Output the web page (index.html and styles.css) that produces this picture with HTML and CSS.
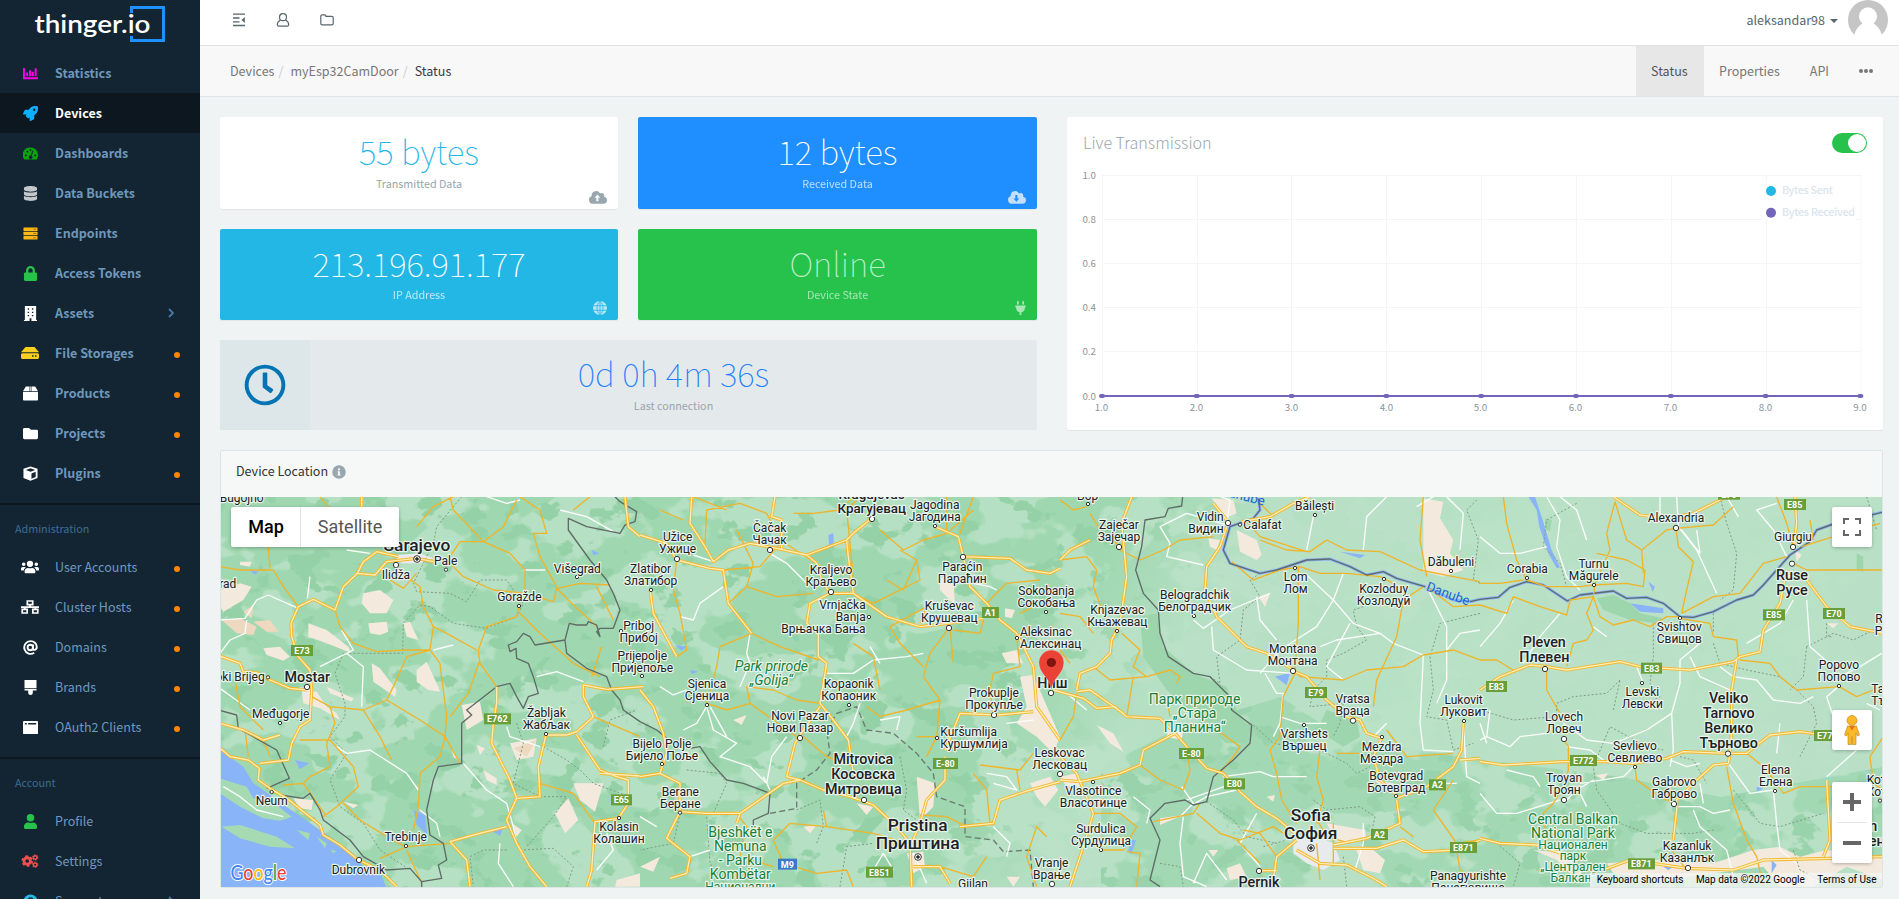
FILE: index.html
```html
<!DOCTYPE html>
<html lang="en">
<head>
<meta charset="utf-8">
<title>thinger.io - Device Status</title>
<link rel="stylesheet" href="styles.css">
</head>
<body>
<div class="app">
<aside class="sidebar">
  <div class="logo">
    <svg width="200" height="53" viewBox="0 0 200 53"><path d="M131.500 13V7.500H163.500V40.500H131.500V36" fill="none" stroke="#1f8ffb" stroke-width="3"/><text x="34.500" y="33" textLength="116" lengthAdjust="spacingAndGlyphs">thinger.io</text></svg>
  </div>
  <ul class="nav strong">
    <li><svg class="ico" viewBox="0 0 16 14" fill="#f0e"><path d="M0 1h2v10h14v2H0zM3.500 6h2v4h-2zM6.500 3.500h2V10h-2zM9.500 5h2v5h-2zM12.500 1.500h2V10h-2z"/></svg><span>Statistics</span></li>
    <li class="active"><svg class="ico" viewBox="0 0 512 512" fill="#0bb0ff"><path d="M505 19c-1-5-6-11-12-12C461 0 435 0 410 0 307 0 245 55 199 128H95c-16 0-35 12-43 26L2.500 253A28 28 0 0 0 0 264a24 24 0 0 0 24 24h104l-23 22c-11 12-13 33 0 46l51 51c11 11 32 13 46 0l22-23v104a24 24 0 0 0 24 24 28 28 0 0 0 11-2.500l99-49c14-8 26-27 26-43V313c73-46 128-109 128-211 0-25 0-51-7-83zM384 168a40 40 0 1 1 40-40 40 40 0 0 1-40 40z"/></svg><span>Devices</span></li>
    <li><svg class="ico" viewBox="0 0 16 13" fill="#0aa30a"><path fill-rule="evenodd" d="M8 0a8 8 0 0 1 8 8c0 1.800-.5 3.600-1.400 5H1.400A8 8 0 0 1 8 0zM2 8.500a1 1 0 1 0 2 0 1 1 0 0 0-2 0zM3.700 4.500a1 1 0 1 0 2 0 1 1 0 0 0-2 0zM7 2.700a1 1 0 1 0 2 0 1 1 0 0 0-2 0zM12 8.500a1 1 0 1 0 2 0 1 1 0 0 0-2 0zM9.800 3.600 8.400 8.500a2 2 0 1 0 1 .4l1.500-5z"/></svg><span>Dashboards</span></li>
    <li><svg class="ico" viewBox="0 0 448 512" fill="#c3c8cc"><path d="M448 73v46c0 40-100 73-224 73S0 159 0 119V73C0 33 100 0 224 0s224 33 224 73zM448 176v103c0 40-100 73-224 73S0 319 0 279V176c48 33 136 49 224 49s176-16 224-49zm0 160v103c0 40-100 73-224 73S0 479 0 439V336c48 33 136 49 224 49s176-16 224-49z"/></svg><span>Data Buckets</span></li>
    <li><svg class="ico" viewBox="0 0 16 14" fill="#fdb813"><rect x=".5" y=".5" width="15" height="3.800" rx=".6"/><rect x=".5" y="5.100" width="15" height="3.800" rx=".6"/><rect x=".5" y="9.700" width="15" height="3.800" rx=".6"/><path stroke="#a86b10" d="M11 2.400h3M11 7h3M11 11.600h3"/></svg><span>Endpoints</span></li>
    <li><svg class="ico" viewBox="0 0 448 512" fill="#27c24c"><path d="M400 224h-24v-72C376 68 308 0 224 0S72 68 72 152v72H48c-26 0-48 22-48 48v192c0 26 22 48 48 48h352c26 0 48-22 48-48V272c0-26-22-48-48-48zm-104 0H152v-72c0-40 32-72 72-72s72 32 72 72z"/></svg><span>Access Tokens</span></li>
    <li><svg class="ico" viewBox="0 0 14 16" fill="#fff"><path fill-rule="evenodd" d="M1 0h12v15h1v1H8v-3H6v3H0v-1h1zM4 2.500v1.500h1.500V2.500zM8.500 2.500v1.500H10V2.500zM4 6v1.500h1.500V6zM8.500 6v1.500H10V6zM4 9.500V11h1.500V9.500zM8.500 9.500V11H10V9.500z"/></svg><span>Assets</span><svg class="chev" viewBox="0 0 6 10"><path d="M1 1l4 4-4 4"/></svg></li>
    <li><svg class="ico wide" viewBox="0 0 18 12" fill="#f9cf1d"><path d="M4.500 0h9L18 5.300H0z"/><path fill-rule="evenodd" d="M1.500 6.200h15c.8 0 1.500.6 1.500 1.500V10.500c0 .8-.7 1.500-1.500 1.500h-15C.7 12 0 11.300 0 10.500V7.700c0-.9.700-1.500 1.500-1.500zM11 8.200v1.600h1.500V8.200zM14 8.200v1.600h1.500V8.200z"/></svg><span>File Storages</span><i class="dot"></i></li>
    <li><svg class="ico" viewBox="0 0 16 15" fill="#fff"><path d="M3 0h4v5H0zM9 0h4l3 5H9zM7.600 0h.8v5h-.8zM0 6h16v8a1 1 0 0 1-1 1H1a1 1 0 0 1-1-1z"/></svg><span>Products</span><i class="dot"></i></li>
    <li><svg class="ico" viewBox="0 0 512 512" fill="#fff"><path d="M464 128H272l-64-64H48C21 64 0 85 0 112v288c0 27 21 48 48 48h416c27 0 48-21 48-48V176c0-27-21-48-48-48z"/></svg><span>Projects</span><i class="dot"></i></li>
    <li><svg class="ico" viewBox="0 0 16 16" fill="#fff"><path fill-rule="evenodd" d="M8 .5 15.500 3v9.800L8 15.800.5 12.800V3zM8 2.500 3 4.200l5 2 5-2zM9 8v5.500l4.500-1.900V6.200z"/></svg><span>Plugins</span><i class="dot"></i></li>
  </ul>
  <h6>Administration</h6>
  <ul class="nav">
    <li><svg class="ico wide" viewBox="0 32 640 448" fill="#fff"><path d="M96 224a64 64 0 1 0 0-128 64 64 0 0 0 0 128zm448 0a64 64 0 1 0 0-128 64 64 0 0 0 0 128zm32 32h-64c-18 0-34 7-45 19 40 22 69 62 75 109h66c18 0 32-14 32-32v-32c0-35-29-64-64-64zm-256 0a112 112 0 1 0 0-224 112 112 0 0 0 0 224zm77 32h-8c-21 10-44 16-69 16s-48-6-69-16h-8c-63 0-115 52-115 115v29c0 26 22 48 48 48h288c26 0 48-22 48-48v-29c0-63-52-115-115-115zm-224-13c-11-12-27-19-45-19H64c-35 0-64 29-64 64v32c0 18 14 32 32 32h66c6-47 35-87 75-109z"/></svg><span>User Accounts</span><i class="dot"></i></li>
    <li><svg class="ico wide" viewBox="0 0 18 14" fill="none" stroke="#fff" stroke-width="1.700"><path d="M6.300 1h5.400v3.600H6.300zM1.200 9.400h5v3.600h-5zM11.800 9.400h5v3.600h-5zM9 5v2.200M0 7.200h18M3.700 7.200v2M14.300 7.200v2"/></svg><span>Cluster Hosts</span><i class="dot"></i></li>
    <li><svg class="ico" viewBox="0 0 16 16" fill="none" stroke="#fff" stroke-width="2"><circle cx="7.800" cy="8" r="2.900"/><path d="M10.900 4.800 10.400 9c-.2 2.300 4.300 2.200 4.300-1.500C14.700 3.800 11.700 1.200 8 1.200a6.800 6.800 0 1 0 4 12.400"/></svg><span>Domains</span><i class="dot"></i></li>
    <li><svg class="ico" viewBox="0 0 12 15" fill="#fff"><path d="M0 0h12v8H0zM0 8.700h12V10.500H8.300V13a2.300 2 0 0 1-4.600 0v-2.500H0z"/></svg><span>Brands</span><i class="dot"></i></li>
    <li><svg class="ico" viewBox="0 0 16 14" fill="#fff"><path fill-rule="evenodd" d="M1 0h14a1 1 0 0 1 1 1v12a1 1 0 0 1-1 1H1a1 1 0 0 1-1-1V1a1 1 0 0 1 1-1zM2 2.200v1.500h2V2.200zM5.500 2.200v1.500H14V2.200z"/></svg><span>OAuth2 Clients</span><i class="dot"></i></li>
  </ul>
  <h6>Account</h6>
  <ul class="nav">
    <li><svg class="ico" viewBox="0 0 448 512" fill="#27c24c"><path d="M224 256a128 128 0 1 0 0-256 128 128 0 0 0 0 256zm90 32h-17c-22 10-47 16-73 16s-51-6-73-16h-17C60 288 0 348 0 422v42c0 26 22 48 48 48h352c26 0 48-22 48-48v-42c0-74-60-134-134-134z"/></svg><span>Profile</span></li>
    <li><svg class="ico wide" viewBox="0 0 18 15" fill="none" stroke="#f05050"><circle cx="6" cy="7.500" r="3.500" stroke-width="3"/><circle cx="6" cy="7.500" r="5.300" stroke-width="1.800" stroke-dasharray="2.800 2.750"/><circle cx="14.500" cy="3.700" r="1.900" stroke-width="1.600"/><circle cx="14.500" cy="3.700" r="3" stroke-width="1" stroke-dasharray="1.600 1.540"/><circle cx="14.500" cy="11.500" r="1.900" stroke-width="1.600"/><circle cx="14.500" cy="11.500" r="3" stroke-width="1" stroke-dasharray="1.600 1.540"/></svg><span>Settings</span></li>
    <li><svg class="ico" viewBox="0 0 16 16"><circle cx="8" cy="8" r="7.500" fill="#23b7e5"/><path d="M5.800 6.200C6 3.500 10.300 3.600 10.200 6.200 10.100 7.800 8 7.800 8 9.500" fill="none" stroke="#132533" stroke-width="1.700"/></svg><span>Support</span><svg class="chev" viewBox="0 0 6 10"><path d="M1 1l4 4-4 4"/></svg></li>
  </ul>
</aside>
<main class="main">
  <header class="topbar">
    <svg class="tb" viewBox="0 0 14 14" stroke="#58666e" stroke-width="1.300"><path d="M1 1.200h12M1 5h6.500M1 8.800h6.500M1 12.500h12" fill="none"/><path d="M12.800 4v6L9.500 7z" fill="#58666e" stroke="none"/></svg>
    <svg class="tb" viewBox="0 0 14 14" fill="none" stroke="#58666e" stroke-width="1.200"><circle cx="7" cy="4.200" r="3.500"/><path d="M4.500 7.200C2.500 8 1.300 9.600 1.300 11.500c0 1 .6 1.700 1.500 1.700h8.400c.9 0 1.500-.7 1.500-1.700 0-1.900-1.200-3.500-3.200-4.300"/></svg>
    <svg class="tb" viewBox="0 0 14 14" fill="none" stroke="#58666e" stroke-width="1.200"><path d="M.8 3.200c0-.9.500-1.400 1.300-1.400h2.500c.8 0 1.300.5 1.300 1.600h5.900c.9 0 1.400.5 1.400 1.300v5.700c0 .9-.5 1.400-1.400 1.400H2.100c-.8 0-1.300-.5-1.300-1.400z"/></svg>
    <div class="user">aleksandar98<b class="caret"></b>
      <svg width="40" height="40" viewBox="0 0 40 40"><circle cx="20" cy="20" r="20" fill="#c5c5c5"/><circle cx="20" cy="16.300" r="9" fill="#fff"/><path d="M6 35c2-6 5-10 9-12h10c4 2 7 6 9 12v5H6z" fill="#fff"/></svg>
    </div>
  </header>
  <div class="subbar">
    <div class="crumbs"><span>Devices</span><em>/</em><span>myEsp32CamDoor</span><em>/</em><span class="cur">Status</span></div>
    <nav class="tabs"><a class="on">Status</a><a>Properties</a><a>API</a><a class="more"><i></i><i></i><i></i></a></nav>
  </div>
  <div class="content">
    <div class="row">
      <div class="stats">
        <div class="card plain"><strong>55 bytes</strong><span>Transmitted Data</span>
          <svg class="corner" width="18" height="13" viewBox="0 32 640 448"><path fill="#98a6ad" fill-rule="evenodd" d="M538 227c4-11 6-23 6-35a96 96 0 0 0-149-80A160 160 0 0 0 96 200 144 144 0 0 0 144 480h368a128 128 0 0 0 26-253zM300 150l100 115h-65v125h-75V265h-65z"/></svg></div>
        <div class="card blue"><strong>12 bytes</strong><span>Received Data</span>
          <svg class="corner" width="18" height="13" viewBox="0 32 640 448"><path fill="#c3deff" fill-rule="evenodd" d="M538 227c4-11 6-23 6-35a96 96 0 0 0-149-80A160 160 0 0 0 96 200 144 144 0 0 0 144 480h368a128 128 0 0 0 26-253zM300 410l100-115h-65V170h-75v125h-65z"/></svg></div>
        <div class="card cyan"><strong>213.196.91.177</strong><span>IP Address</span>
          <svg class="corner" width="14" height="14" viewBox="0 0 14 14"><circle cx="7" cy="7" r="7" fill="#b4e6f6"/><path d="M0 4.700h14M0 9.300h14M7 0v14M7 0C3 3.500 3 10.500 7 14M7 0c4 3.500 4 10.500 0 14" fill="none" stroke="#23b7e5" stroke-width=".8"/></svg></div>
        <div class="card green"><strong>Online</strong><span>Device State</span>
          <svg class="corner" width="11" height="14" viewBox="0 0 384 512"><path fill="#a9e7b7" d="M320 32a32 32 0 0 0-64 0v96h64zm48 128H16a16 16 0 0 0-16 16v32a16 16 0 0 0 16 16h16v32a160 160 0 0 0 128 157v99h64v-99a160 160 0 0 0 128-157v-32h16a16 16 0 0 0 16-16v-32a16 16 0 0 0-16-16zM128 32a32 32 0 0 0-64 0v96h64z"/></svg></div>
        <div class="last"><div class="clock"><svg width="42" height="42" viewBox="0 0 512 512"><path fill="#0574b5" d="M256 8a248 248 0 1 0 0 496 248 248 0 0 0 0-496zm0 448a200 200 0 1 1 0-400 200 200 0 0 1 0 400zm62-104-85-62c-3-2-5-6-5-10V116c0-7 5-12 12-12h32c7 0 12 5 12 12v142l67 48c5 4 6 12 2 17l-18 26c-4 5-12 7-17 3z"/></svg></div>
          <div class="lastbody"><strong>0d 0h 4m 36s</strong><span>Last connection</span></div></div>
      </div>
      <div class="chartcard">
        <div class="charthead"><h4>Live Transmission</h4><i class="switch"></i></div>
        <svg class="chart" width="786" height="250" viewBox="1082 167 786 250">
          <path class="grid" d="M1102 175.500H1861M1102 219.500H1861M1102 263.500H1861M1102 307.500H1861M1102 351.500H1861M1102.500 175V396M1197.500 175V396M1291.500 175V396M1386.500 175V396M1481.500 175V396M1576.500 175V396M1671.500 175V396M1766.500 175V396M1861 175V396"/>
          <rect x="1765" y="180" width="91" height="40" fill="#fff" opacity=".85"/>
          <circle cx="1771" cy="191" r="5" fill="#23b7e5"/><circle cx="1771" cy="212.700" r="5" fill="#7266ba"/>
          <g class="legend"><text x="1782" y="194" textLength="51">Bytes Sent</text><text x="1782" y="216" textLength="73">Bytes Received</text></g>
          <path d="M1102 396H1861" stroke="#7266ba" stroke-width="2"/>
          <path d="M1101 396H1862" stroke="#7266ba" stroke-width="4" stroke-dasharray="2 92.800" stroke-linecap="round"/>
          <g class="axis end"><text x="1096" y="179">1.0</text><text x="1096" y="223">0.8</text><text x="1096" y="267">0.6</text><text x="1096" y="311">0.4</text><text x="1096" y="355">0.2</text><text x="1096" y="400">0.0</text></g>
          <g class="axis mid"><text x="1101.500" y="411">1.0</text><text x="1196.500" y="411">2.0</text><text x="1291.500" y="411">3.0</text><text x="1386.500" y="411">4.0</text><text x="1480.500" y="411">5.0</text><text x="1575.500" y="411">6.0</text><text x="1670.500" y="411">7.0</text><text x="1765.500" y="411">8.0</text><text x="1860" y="411">9.0</text></g>
        </svg>
      </div>
    </div>
    <section class="panel">
      <div class="phead">Device Location <svg width="14" height="14" viewBox="0 0 512 512"><path fill="#98a6ad" fill-rule="evenodd" d="M256 8a248 248 0 1 0 0 496 248 248 0 0 0 0-496zm0 110a42 42 0 1 1 0 84 42 42 0 0 1 0-84zm56 254c0 7-5 12-12 12h-88c-7 0-12-5-12-12v-24c0-7 5-12 12-12h12v-64h-12c-7 0-12-5-12-12v-24c0-7 5-12 12-12h64c7 0 12 5 12 12v100h12c7 0 12 5 12 12z"/></svg></div>
      <div class="mapbox">
<svg class="map" width="1661" height="390" viewBox="0 0 1661 390">
<defs>
<filter id="dark" color-interpolation-filters="sRGB" x="0" y="0" width="100%" height="100%"><feTurbulence type="fractalNoise" baseFrequency=".012 .016" numOctaves="4" seed="8"/><feColorMatrix values="0 0 0 0 .62  0 0 0 0 .845  0 0 0 0 .69  26 0 0 0 -11.700"/></filter>
<filter id="deep" color-interpolation-filters="sRGB" x="0" y="0" width="100%" height="100%"><feTurbulence type="fractalNoise" baseFrequency=".03 .04" numOctaves="4" seed="21"/><feColorMatrix values="0 0 0 0 .58  0 0 0 0 .82  0 0 0 0 .65  20 0 0 0 -12.200"/></filter>
<linearGradient id="fade" x1="0" x2="1" y1="0" y2=".14"><stop offset="0" stop-color="#fff"/><stop offset=".54" stop-color="#fff"/><stop offset=".62" stop-color="#222"/><stop offset="1" stop-color="#111"/></linearGradient>
<mask id="west"><rect width="1661" height="390" fill="url(#fade)"/><path d="M880 270 960 230 1060 200 1120 240 1240 260 1400 280 1500 300 1661 270V390H880z" fill="#ddd"/></mask>
<g id="majA"><path d="M425 20V60M-10 495 60 520 70 545 110 548 150 570 210 595 260 600M535 200 470 185 430 215 412 250 370 290 345 360 280 328 235 350 213 400 215 440 235 500 270 540 275 600 270 690 240 710 215 760 205 810 120 820M0 700 70 720 130 750 180 735M-10 765 30 800 85 810 118 835 115 870 150 895 200 925 300 1005 310 1035 360 1065 415 1110 480 1140 530 1190M412 250 465 255 500 215 590 205 640 215M830 590V640L820 700 815 760 870 870 890 925 960 920 955 830 978 735 1040 735 1070 725 1120 680 1090 620 1090 585 1160 598 1270 590M1070 735 1140 840 1190 860 1225 870V940L1195 985 1125 995 1115 1140 1100 1190M1140 850 1260 858M890 925 860 990 890 1060 930 1130 980 1190M690 1055 760 1035 860 1010M690 1055 740 1110 750 1190M1215 20 1225 110 1260 140"/></g>
<g id="majB"><path d="M155 20 150 100 195 170 220 215 265 180 330 160 410 175 500 195 620 150 640 130 695 85M500 195 530 220 545 270 570 310 640 310 740 380 840 410 925 400 1030 385M0 135 80 160 110 210 210 235 250 240 265 340 335 430M405 20 395 80 425 90V180M620 150 625 200 640 310M570 310 510 340 500 400 535 430V500L560 520 540 640 580 690 625 750 640 850M540 650 490 720 465 760 440 860 480 870 550 900 630 920 700 945 770 1010 810 1060 815 1190M480 870 430 880 300 970 200 970 120 965 80 1045 150 1100 140 1150 90 1165M0 600 40 650 70 730 80 790 60 850 0 860M60 850 120 880V965M885 110 955 140 970 200 990 290 1040 340 1080 390 1130 430 1180 530 1190 650 1260 750M970 200 1110 205 1160 240 1230 250 1260 235M1180 665 1070 675 960 670 940 720 915 780M860 930 915 870V800M860 930 840 1000 815 1060M820 1130 900 1130 930 1180M30 300 40 370 110 500M960 1010 1060 1000 1080 930 1170 900 1260 875M300 970 290 1000"/></g>
<g id="majC"><path d="M-20 600 70 625 110 655 165 650 200 680 300 685 345 730 380 770 440 835 490 850 540 905 590 950 650 985 710 1035M50 605 90 600 190 670M50 600 60 550 110 530 150 490 155 450 180 400 200 260 185 100 215 20M0 210 30 180 90 150M690 540 740 560 800 630 860 680 900 690 920 730 965 745 940 800 960 870 1010 915M500 110 480 170 440 230 435 300 470 380 560 470 620 490 700 540M460 40 500 90M545 95 630 80 700 40 750 20M1010 930 1020 1000 920 1045 820 1065M1010 925 1100 890 1180 830 1205 780 1210 700M1200 810 1260 805M820 1075 950 1075 1030 1050 1090 1085 1200 1080 1260 1050M640 1170 650 1100 710 1050M710 1080 780 1120 860 1125 940 1165 980 1190M345 730 250 780 240 825 180 850 60 875 0 870M0 800 50 850 100 970 70 1070 30 1190M597 1142H650"/></g>
<g id="majD"><path d="M0 815 70 825 250 815 380 815 460 820 560 805 610 785 740 790 800 790 870 735 960 725 1060 740M0 600 60 560 150 525 200 530 260 540 420 515 480 530 630 540 760 515 780 500 840 485 850 420 900 340 920 240M770 510 755 600V720L750 790 745 820 700 825 640 880 590 930V960L580 1050M940 180 950 100 945 20M965 250 1040 350 1110 410 1210 430M400 20 480 75 560 85 640 70 740 20M0 1045 60 1060 170 1065 300 1110M370 1140 450 1110 620 1135 760 1140 850 1110 1050 1105 1210 1100M1040 870 1050 1050 1030 1100"/></g>
</defs>
<rect width="1661" height="390" fill="#bbe2c8"/>
<g mask="url(#west)"><rect width="1661" height="390" fill="#b6e0c3"/><rect width="1661" height="390" filter="url(#dark)"/><rect width="1661" height="390" filter="url(#deep)"/></g>
<g class="land" transform="translate(-1 -7) scale(.33333)">
 <path class="sea" d="M0 780 70 830 100 880 130 900 170 930 300 1020 400 1090 430 1130 480 1145 500 1195H0z"/>
 <path class="isle" d="M0 865 80 890 100 925 150 930 215 980 180 992 130 985 60 950 0 910zM5 1010 60 1005 170 1040 225 1075 150 1070 60 1045zM230 1020 270 1030 265 1050zM290 1040 320 1060 315 1075zM330 1078 350 1084 340 1090z"/>
 <path class="lake" d="M580 960 615 975 622 1035 590 1005zM225 810 268 820 240 838zM85 238 115 245 105 254zM1115 180 1138 190 1120 196zM820 1025 850 1010 840 1038z"/>
 <path class="sand" d="M0 300 60 280 95 290 70 330 10 365 0 350zM430 310 480 300 520 330 500 370 450 370 425 340zM445 400 500 395 505 425 480 435 450 430zM550 400 570 395 595 450 560 440zM265 400 320 420 385 470 395 490 320 460 265 440zM130 475 180 470 210 500 190 512 140 495zM590 540 620 515 655 590 660 605 625 600 590 575zM455 520 480 535 530 600 525 620 460 575zM245 600 290 605 320 650 350 670 360 690 300 655 250 640zM320 590 400 625 395 635 330 610zM725 645 780 635 790 690 740 720zM870 760 950 745 940 800 890 810zM1060 880 1150 880 1125 965 1080 930zM1005 970 1045 925 1075 990 1035 1030zM220 925 280 930 275 960 240 955zM370 935 415 945 400 955zM695 775 720 815 700 800zM790 840 830 865 830 885 800 870zM770 765 795 775 780 795zM1190 1170 1260 1150V1190H1185zM60 215 95 215 90 230 60 225zM875 1000 905 1020 890 1040z"/>
 <path class="tan" d="M5 390 60 385 110 410 100 435 50 430zM100 395 150 390 175 425 140 425zM70 365 100 345 95 385zM880 775 950 750 920 800z"/>
 <path class="city" d="M520 195 600 190 640 205 600 220 545 220zM240 590 275 600 255 620z"/>
</g>
<g class="land" transform="translate(419 -7) scale(.33333)">
 <path class="sand" d="M900 260 940 270 945 345 900 300zM1095 355 1125 360 1115 385 1095 380zM1140 560 1180 555 1260 740 1240 790 1190 740 1130 700 1160 650zM830 860 885 880 880 950 840 990zM1085 490 1130 480 1150 520 1100 520zM1170 880 1230 860 1255 900 1215 950 1190 920zM280 690 320 675 305 705zM650 940 700 950 680 975zM800 1090 850 1085 855 1130 820 1150zM490 1010 530 1005 510 1030zM1100 1160 1140 1160 1120 1190zM0 1130 60 1100 40 1145z"/>
 <path class="lake" d="M565 135 580 130 582 170 568 175zM105 465 140 470 125 482zM150 540 175 545 155 552z"/>
</g>
<g class="land" transform="translate(839 -7) scale(.33333)">
 <path class="wood" d="M240 380 290 370 310 470 400 550 500 590 530 660 570 710 560 760 500 760 430 700 320 600 250 500zM800 660 890 690 900 740 850 770 770 720z"/>
 <path class="sand" d="M455 25 520 30 530 70 495 85zM530 120 590 150 605 195 590 210 540 185zM1090 25 1150 35 1140 85 1180 150 1170 190 1210 240 1150 260 1090 245zM110 705 160 730 190 785 150 760zM445 145 480 150 470 180 450 170zM595 320 630 312 615 350zM325 715 370 720 365 750 320 740zM620 920 645 915 640 935zM800 1000 915 1020 920 1050 830 1055zM885 1070 940 1080 975 1110 960 1150 910 1140zM300 985 370 975 300 1005zM0 860 50 850 60 890 20 890zM445 1080 475 1080 460 1100zM500 1135 540 1120 560 1160 510 1170zM940 870 1000 880 990 910z"/>
 <path class="city" d="M700 1050 760 1035 820 1060 840 1110 790 1140 740 1120 700 1090z"/>
 <path class="lake" d="M645 560 690 548 680 585zM840 185 915 195 900 205zM210 1050 228 1050 215 1092 205 1085z"/>
</g>
<g class="land" transform="translate(1259 -7) scale(.33333)">
 <path class="sand" d="M820 1080 900 1070 960 1100 1040 1080 1210 1100V1170L1100 1130 1000 1190H900L850 1130 700 1150 560 1170 400 1150 380 1120 530 1110 700 1120zM160 1080 260 1090 310 1140 290 1170 230 1110zM1040 400 1075 400 1060 415zM345 855 385 850 370 870zM945 180 965 195 950 215z"/>
 <path class="lake" d="M145 20 165 20 188 90 215 180 240 232 230 235 205 190 178 110 170 60zM505 275 525 290 518 305zM875 1110 890 1125 875 1150zM550 1130 580 1130 565 1140zM450 340 480 365 550 370 550 355zM830 890 850 895 830 905z"/>
 <path class="wood" d="M350 325 400 315 450 340 480 370 550 385 530 400 450 390 370 360zM195 85 215 90 210 125 195 115zM1130 190 1150 200 1150 245 1130 240z"/>
</g>
<g class="river" transform="translate(839 -7) scale(.33333)"><path d="M595 25 600 60 580 85 510 110 490 180 510 220 600 250 650 240 740 210 810 207 870 230 920 255 970 245 1010 265 1095 290 1180 330 1230 335 1260 328 1315 322 1350 292 1400 275 1450 285 1522 333 1560 315 1660 303 1700 325 1760 322 1810 340 1860 380 1900 382 1960 365 2030 330 2080 315 2110 285 2150 240 2190 195 2250 155 2270 120 2320 102 2470 66"/></g>

<g transform="translate(-1 -7) scale(.33333)">
 <path class="dash" d="M725 20 650 110 640 160 610 220 580 280 590 305 690 310 740 335 780 270 860 270 880 300 910 340 890 380 800 415 700 400 630 350 600 345 550 400 548 490 370 490 345 550 375 640V680L330 740 380 790 330 870 360 950 430 1000 480 1080 570 1140M970 770 1040 810 1080 840 1120 880 1230 920M890 700 910 760 880 880 960 920M860 1080 790 1080 750 1100 760 1190M900 1080 1000 1075 1060 1130 1040 1190M1150 770 1170 690 1250 660M960 920 1040 920 1000 980 920 1070"/>
 <path class="white" d="M0 390 75 385 110 330 145 315 235 355M270 260 262 325M380 180 450 190M380 490 430 530 425 650M350 770 380 790 450 780 560 850 595 900M730 820 800 900 860 940 880 1010 890 1060 910 1100M640 480 700 465M860 710 870 740 960 770M950 560 1010 545 1090 575M0 595 90 660M10 890 60 920 110 960 190 980M600 960 650 1000 660 1040M365 420 400 480 300 530M1020 60 1100 80 1180 125M0 490 30 450 75 430 80 390M910 240 975 240M1130 1140 1180 1080 1160 1030M840 1060 835 1120 880 1190M800 20 860 40 900 30"/>
 <path class="minor" d="M0 230 60 240 160 240 190 290 235 350M145 170 150 235M590 110 640 50 700 20M340 70 300 20M640 215 690 200 720 155 790 155 850 110 890 30M690 220 730 260 820 300 915 310V240L870 190 790 155 700 60 690 20M915 310 1000 335 1010 295 1080 280 1170 285M1010 295 1060 345 1110 390 1130 410M900 340 890 380 800 410 775 480 780 520 830 590M900 370 960 430 1060 520 1140 560M345 360 360 410 400 460 470 485 560 480 630 480 640 410 610 350 600 290 520 230M640 410 680 430 770 480M630 480 560 500 520 590 500 630 430 660 330 650 275 620M430 660 480 740 515 810M500 630 600 690 675 740M630 480 660 520 670 600 680 680 675 740 660 800 600 850 595 950 580 1020M675 740 720 820M780 510 745 610 690 680M330 650 345 700 320 760 330 830 270 860 250 880 190 885M240 750 330 750 400 830 415 890 350 950 310 980M480 1105 560 1070 690 1060M370 940 420 990 500 1040 555 1070M960 880 1060 910 1125 1000M940 130 960 200 1010 290M75 720 85 800M560 1080 605 1180M1130 290 1180 390M1145 470 1115 560M1120 680 1190 710 1260 740M940 130 980 130 960 60 900 20M510 270 550 295 590 250M45 570 60 650 130 720M130 750 150 800M250 880 320 980M1060 60 1110 20"/>
 <path class="border" d="M-5 660 50 675 55 715 170 780 208 865 140 895M180 915 250 925 270 910 300 960 310 990 390 1050 430 1100 500 1140 570 1135 605 1175 665 1165 655 1125 680 1110 670 1060 630 1035 620 960 640 870 655 830 725 820V700L755 675 740 660 830 590 870 580 890 620 910 655 925 620 955 610 940 560 925 520 890 505 888 475 870 485 865 465 890 455 910 430 930 440 945 465 1035 450 1048 400 1070 405 1100 405 1105 395 1130 405 1140 440 1130 425 1140 415 1180 415 1200 360 1180 310 1160 270 1110 210 1045 120V85L1100 110 1200 130 1215 105 1245 95 1250 65 1200 35 1185 20M1035 450 1040 490 1100 535 1160 560 1175 600 1200 630 1210 660 1260 695 1310 720 1340 745 1410 775 1440 770 1470 815 1520 870 1570 880 1650 910 1645 970 1600 990V1010M605 1175V1195"/>
 <use href="#majA" class="mo"/><use href="#majA" class="mi"/>
</g>
<g transform="translate(419 -7) scale(.33333)">
 <path class="ddash" d="M390 970 470 955V880L530 840 570 790 560 720 590 670 650 650 680 720 760 730 830 790 880 850 890 920 975 950V1040L1060 1050 1090 1085 1170 1080 1180 1190"/>
 <path class="dash" d="M140 840 240 850 260 880 220 970M120 970 100 1060 0 1080M780 800 800 900 790 960 830 990M470 960 540 930 550 1010 530 1060M600 1190 620 1070 700 1060M200 980 210 1120 260 1190"/>
 <path class="white" d="M120 380 160 390 180 340 250 290M160 195 220 215M390 190 440 220 500 280M330 430 320 490 330 520 300 590M60 590 100 615 140 600M200 650 170 700 130 720M200 650 220 720 290 760 240 800 330 830 380 880 395 800 440 740M210 650 260 740M560 550 640 550 700 510 800 500 850 490M690 470 720 520M660 640 640 700 620 740M720 690 780 680 770 720M1100 700 1180 690M1060 880 1130 900 1100 860 1040 850M1060 1010 1110 1060 1100 1100M820 1090 860 1180M700 1140 730 1090 760 1140M150 1100 210 1080M0 980 50 1010M1000 280 1050 290 1070 300M370 860 390 900"/>
 <path class="minor" d="M195 160 200 60 300 40 380 70 410 130M250 240 360 230 420 160M460 70 520 70 600 60 640 20M265 340 320 290 410 320 520 310M320 290 340 220 290 120M110 210 100 300 120 370 140 480 110 500M335 430 420 470 535 510M335 430 240 470 230 530 200 640 260 660 330 640 320 590 400 600 470 630 540 640M330 640 400 690 470 740M490 740 560 800 640 830M720 120 790 180 850 150 920 130 1000 60M780 180 830 210 790 300 740 270M640 310 700 340 840 270 830 210M640 260 620 60 660 20M930 410 870 490 850 560 900 630 890 740 860 800M930 410 940 520M840 400 860 350 750 410 780 460 850 530M1030 390 1020 430 940 420M1130 440 1140 530 1060 550 1050 600 1060 670M680 650 720 680 800 660 900 630M1040 340 1100 280 1200 270M1140 370 1200 340 1260 350M890 740 830 740M840 975 920 980 980 1010M1000 850 1040 900 1050 1000M1130 840 1140 900M1020 825 1140 840 1180 790M400 1050 450 1000 560 1010M400 1050 430 1120 530 1150 620 1140 640 1190M560 1010 700 1030 800 1060M560 1010 550 960M900 1130 1000 1160 1040 1100M640 460 700 500 720 600M160 20 260 60M920 20V130M1000 20 960 130M1190 1190 1160 1100 1190 1010 1220 1040M290 970 320 1010 300 1100 400 1130M420 150 560 240M60 60 130 90"/>
 <use href="#majB" class="mo"/><use href="#majB" class="mi"/>
</g>
<g transform="translate(839 -7) scale(.33333)">
 <path class="dash" d="M600 250 570 270 600 320 550 360 540 450 470 500 480 580 450 560M910 350 880 360 890 410 920 450 850 490 800 510 800 560 760 600 750 650 850 640M580 705 640 760 780 780 860 820 890 850 930 830M1250 30 1220 60 1255 150 1240 270 1260 280M1260 370 1140 400 1110 500 1120 600 1100 680 1160 690 1180 780 1240 760M440 935 520 990 560 1040 650 1060M760 930 800 960 900 950 945 980 930 1050M300 1120 360 1130 370 1190M610 1070 680 1050M850 1100 860 1190M850 640 840 700 820 740"/>
 <path class="white" d="M500 110 510 30 480 20M500 105 380 70 300 110 330 160 320 200 430 225M740 180 760 80M910 180 920 80 980 20M850 250 820 330 880 400 960 430 1000 460 1090 495 1080 700 1090 780 1180 785M740 255 820 330 770 410 660 480 600 550M590 320 600 390 650 450M455 410 460 480 560 540 700 550M615 550 650 610 670 610 660 700 640 740M660 680 720 700 800 700M400 390 430 415 510 360 630 310M780 470 830 450 960 430M1100 290 1160 410 1160 570 1130 640M1160 480 1200 430 1260 420M1210 700 1220 860 1260 880M1070 50 1120 20M490 860 600 845 640 860 740 860M590 970 540 1060 600 1130 560 1080M370 980 360 1060 370 1160 440 1190M220 920 270 960 260 1000M365 890 400 940 360 980M530 900 440 920 405 940M885 1140 910 1060 910 1000M870 400 800 530 850 570M980 700 940 740M20 610 80 660M500 1170 440 1090 400 1180M520 880 380 930M1120 880 1190 880M1160 20 1210 70 1200 180"/>
 <path class="minor" d="M0 30 40 60 80 50M90 70 120 120 180 170M0 210 80 200 110 240 100 290 130 370M180 180 240 210 310 180 360 150 460 140M0 370 60 380 100 430M185 430 240 480 220 530 260 560 330 540 360 560 350 580M100 530 150 570 260 560M200 680 220 560M0 480 30 520M50 610 40 680 0 750M240 825 300 870 370 900 390 840 380 780M470 720 540 770 520 800 480 850M330 680 320 620M600 150 680 180 750 185 800 150 860 180 960 185 1080 240 1180 260 1260 275M1100 260 1080 150 1090 20M515 215 580 270 660 240 720 230 780 250 860 250 960 260 1000 280M715 230 715 400 705 540 720 560 850 570 920 540 1030 530 1090 495 1180 480 1260 510M1090 290 1030 330 1010 440 950 570 940 650M1100 290 1180 350 1260 345M705 550 670 620 660 740 630 780 650 850 665 930 710 1000M780 780 770 860 790 930 770 1000M830 790 900 790M720 0 740 30M560 95 600 140 740 185M640 80 600 40M410 970 480 1030 540 1050 640 1010 700 1050M280 995 400 970 420 940M650 1100 600 1030 550 1020M530 1050 600 1120M1180 870 1120 960 1190 1060 1260 1050M100 970 180 970 230 1010 190 1080 130 1080M200 1085 240 1090 230 1190M980 720 1040 800 1180 790M1020 1010 1060 1040M1190 1080 1200 1140 1260 1170M870 1060 800 1040 760 970M820 1000 820 1130M770 1060 780 1170"/>
 <path class="border" d="M368 20 365 48 325 55 315 80 255 90 245 170 227 240 250 310 295 360 300 430 325 500 400 550 450 560 510 620 515 660 575 705 570 760 520 810 460 860 440 935 400 945 375 930 315 940 270 985 300 1050 285 1110 270 1170 300 1190M595 25 600 60 580 85 510 110 490 180 510 220 600 250 650 240 740 210 810 207 870 230 920 255 970 245 1010 265 1095 290M1230 335 1260 328 1315 322 1350 292 1400 275 1450 285 1522 333 1560 315 1660 303 1700 325 1760 322 1810 340 1860 380 1900 382 1960 365 2030 330 2080 315 2110 285 2150 240 2190 195 2250 155 2270 120 2320 102 2470 66"/>
 <use href="#majC" class="mo"/><use href="#majC" class="mi"/>
</g>
<g transform="translate(1259 -7) scale(.33333)">
 <path class="dash" d="M290 40 200 90 190 170 240 220 260 290M720 20 740 100 770 190 760 300 720 330M520 400 520 500 510 580 540 620 500 640M700 460 720 520 800 540 900 560 950 600 1000 650 1010 700 960 800M980 470 1060 430 1120 450 1180 420M980 470 970 560 930 600M420 570 380 610 280 620 230 640 230 680 100 690 0 660M400 660 420 570M550 780 500 770 390 710 340 830 350 900 420 1000 500 1030 640 1030 700 1020M600 800 640 810 680 880M760 900 840 1000 900 1010 1030 970M50 1060 120 1120 100 1190M1160 20 1190 120M1040 400 1040 440 1060 440M700 370 700 430M400 1010 330 1060M940 1080 960 1140 1040 1180"/>
 <path class="white" d="M200 20 240 90 230 170 260 260 300 300M0 140 60 190 120 190 200 170M240 20 290 60 320 150M540 20V90M590 20 595 110M595 110 650 180 710 310M605 120 660 190 650 120M740 20 775 80M890 40 830 60 880 120 920 200M240 370 180 440 130 520M470 530 490 580M660 460 600 510 600 580 575 670 500 720 400 760 320 750 250 700M575 670 580 780 570 830M630 500 660 560 750 600M720 530 760 560 830 570 880 630 960 640 1000 620M980 330 990 470 1060 530M1205 490 1140 530 1080 560M1075 590 1040 620 1060 680M30 660 20 740 0 750M20 740 90 770 120 740 200 730M260 770 330 780 370 810M340 870 290 900 260 930M300 880 430 860 460 830M0 910 50 970 110 970 240 930M80 840 160 860 180 890M660 820 620 830 570 810M590 950 660 950 700 970 750 960M660 880 670 940M745 820 810 910 880 900 890 1000 900 1080 950 1120M1040 860 1130 780M640 960 660 1010 740 1080 760 1160M900 700 890 790M1160 640 1200 660M0 700 20 760M340 410 380 440M100 330 60 400 0 470M800 460 900 400 940 330M290 890 320 950"/>
 <path class="minor" d="M70 20 80 100 110 210 140 270 200 290 300 290 340 285 440 280 490 290 495 240 440 210 350 190M405 35 380 130 390 180 345 280M405 35 440 150 485 180 490 250M485 180 560 120 588 115M588 115 595 170 640 215 620 300 605 370M588 115 700 105 760 50M605 370 700 320 780 310 850 220 920 200M0 280 60 280 130 270M0 345 80 370 100 320 180 350 260 375 270 330 340 320 345 280M340 320 360 380 400 405 460 390 510 410 560 380 600 380M340 320 320 370 340 420 320 450 280 460 260 530M0 510 50 510 100 540M200 540 200 600 240 670M252 750 265 770 265 840 250 890 220 940 190 970 200 1050M465 830 470 870 540 920 580 940M600 385 690 400 700 440 770 450 775 500M740 830 760 940 800 1050 830 1100 850 1190M800 790 850 830 890 880 910 910 960 890 1060 890M890 20 920 100 940 170M965 170 1060 140 1200 100M930 215 980 240 1100 240 1205 240M780 510 870 520 900 560 950 600 1077 590 1130 620 1180 600M1210 740 1170 800 1180 880 1210 900M380 1140 300 1140 240 1170M620 1140 560 1060M1000 150 990 90"/>
 <use href="#majD" class="mo"/><use href="#majD" class="mi"/>
</g>

<g class="lab" transform="translate(-1 -7) scale(.33333)">
 <g class="pt"><circle cx="528" cy="225" r="8"/><circle cx="678" cy="239" r="5"/><circle cx="1071" cy="261" r="5"/><circle cx="897" cy="348" r="5"/><circle cx="261" cy="591" r="8"/><circle cx="144" cy="562" r="5"/><circle cx="180" cy="699" r="5"/><circle cx="978" cy="732" r="5"/><circle cx="155" cy="906" r="5"/><circle cx="558" cy="1068" r="5"/><circle cx="417" cy="1110" r="8"/><circle cx="1197" cy="984" r="5"/><circle cx="1203" cy="423" r="5"/><circle cx="1266" cy="558" r="5"/><circle cx="1326" cy="822" r="5"/><circle cx="1293" cy="300" r="5"/><circle cx="591" cy="207" r="10"/><circle class="k" cx="591" cy="207" r="4"/></g>
 <text x="65" y="37">Bugojno</text><text class="c" x="591" y="184">Sarajevo</text><text x="677" y="226">Pale</text><text x="528" y="268">Ilidža</text><text class="e" x="49" y="295">rad</text><text x="1072" y="248">Višegrad</text><text x="898" y="334">Goražde</text><text class="b" x="262" y="576">Mostar</text><text class="e" x="134" y="574">Široki Brijeg</text><text x="182" y="685">Međugorje</text>
 <text x="979" y="682">Žabljak<tspan x="979" dy="36">Жабљак</tspan></text><text x="155" y="945">Neum</text><text x="557" y="1054">Trebinje</text><text x="415" y="1152">Dubrovnik</text>
 <text x="1197" y="1024">Kolasin<tspan x="1197" dy="36">Колашин</tspan></text><text x="1256" y="419">Priboj<tspan x="1256" dy="36">Прибој</tspan></text><text x="1267" y="509">Prijepolje<tspan x="1267" dy="36">Пријепоље</tspan></text><text x="1326" y="773">Bijelo Polje<tspan x="1326" dy="36">Бијело Поље</tspan></text><text x="1292" y="250">Zlatibor<tspan x="1292" dy="36">Златибор</tspan></text>
 <g class="sh"><rect x="213" y="465" width="66" height="33"/><text x="246" y="491">E73</text><rect x="792" y="670" width="81" height="33"/><text x="832" y="697">E762</text><rect x="1173" y="913" width="63" height="33"/><text x="1204" y="940">E65</text></g>
</g>
<g class="lab" transform="translate(419 -7) scale(.33333)">
 <g class="pt"><circle cx="111" cy="207" r="8"/><circle cx="390" cy="180" r="8"/><circle cx="696" cy="87" r="8"/><circle cx="885" cy="108" r="5"/><circle cx="969" cy="201" r="8"/><circle cx="573" cy="306" r="8"/><circle cx="687" cy="381" r="5"/><circle cx="927" cy="414" r="8"/><circle cx="1218" cy="366" r="5"/><circle cx="1131" cy="444" r="5"/><circle cx="201" cy="645" r="5"/><circle cx="627" cy="645" r="5"/><circle cx="480" cy="744" r="8"/><circle cx="1062" cy="675" r="8"/><circle cx="891" cy="744" r="5"/><circle cx="672" cy="930" r="8"/><circle cx="120" cy="968" r="5"/><circle cx="1233" cy="609" r="8"/><circle cx="1260" cy="852" r="8"/><circle cx="1236" cy="1182" r="8"/><circle cx="834" cy="1101" r="10"/><circle class="k" cx="834" cy="1101" r="4"/></g>
 <text x="113" y="154">Užice<tspan x="113" dy="36">Ужице</tspan></text><text x="389" y="127">Čačak<tspan x="389" dy="36">Чачак</tspan></text><text class="b s" x="695" y="28">Kragujevac<tspan x="695" dy="40">Крагујевац</tspan></text><text x="884" y="58">Jagodina<tspan x="884" dy="36">Јагодина</tspan></text><text x="967" y="244">Paraćin<tspan x="967" dy="36">Параћин</tspan></text><text x="573" y="253">Kraljevo<tspan x="573" dy="36">Краљево</tspan></text><text class="e" x="677" y="358">Vrnjačka<tspan x="677" dy="36">Banja</tspan><tspan x="677" dy="36">Врњачка Бања</tspan></text><text x="928" y="361">Kruševac<tspan x="928" dy="36">Крушевац</tspan></text><text x="1219" y="316">Sokobanja<tspan x="1219" dy="36">Сокобања</tspan></text><text class="st" x="1140" y="439">Aleksinac<tspan x="1140" dy="36">Алексинац</tspan></text><text x="201" y="595">Sjenica<tspan x="201" dy="36">Сјеница</tspan></text><text x="626" y="595">Kopaonik<tspan x="626" dy="36">Копаоник</tspan></text><text x="480" y="691">Novi Pazar<tspan x="480" dy="36">Нови Пазар</tspan></text><text x="1062" y="622">Prokuplje<tspan x="1062" dy="36">Прокупље</tspan></text><text class="st" x="901" y="739">Kuršumlija<tspan x="901" dy="36">Куршумлија</tspan></text><text x="1259" y="800">Leskovac<tspan x="1259" dy="36">Лесковац</tspan></text><text x="121" y="919">Berane<tspan x="121" dy="36">Беране</tspan></text><text x="999" y="1193">Gjilan</text><text x="1235" y="1130">Vranje<tspan x="1235" dy="36">Врање</tspan></text>
 <text class="b" x="670" y="823">Mitrovica<tspan x="670" dy="45">Косовска</tspan><tspan x="670" dy="45">Митровица</tspan></text><text class="c" x="833" y="1022">Pristina<tspan x="833" dy="54">Приштина</tspan></text><text class="b st" x="1192" y="593">Ниш</text>
 <text class="g it" x="394" y="543">Park prirode<tspan x="394" dy="42">„Golija“</tspan></text><text class="g" x="301" y="1042">Bjeshkët e<tspan x="301" dy="42">Nemuna</tspan><tspan x="301" dy="42">- Parku</tspan><tspan x="301" dy="42">Kombëtar</tspan></text><text class="g s2" x="301" y="1202">Национални</text>
 <g class="sh"><rect x="1026" y="351" width="51" height="33"/><text x="1051" y="379">A1</text><rect x="879" y="804" width="75" height="33"/><text x="916" y="831">E-80</text><rect class="bl" x="414" y="1106" width="57" height="33"/><text x="442" y="1134">M9</text><rect x="678" y="1130" width="81" height="33"/><text x="718" y="1157">E851</text></g>
</g>
<g class="lab" transform="translate(839 -7) scale(.33333)">
 <g class="pt"><circle cx="84" cy="42" r="5"/><circle cx="177" cy="171" r="8"/><circle cx="504" cy="99" r="8"/><circle cx="540" cy="104" r="5"/><circle cx="765" cy="75" r="5"/><circle cx="1173" cy="243" r="5"/><circle cx="705" cy="234" r="5"/><circle cx="972" cy="267" r="5"/><circle cx="402" cy="378" r="5"/><circle cx="171" cy="423" r="5"/><circle cx="699" cy="543" r="8"/><circle cx="879" cy="692" r="8"/><circle cx="732" cy="705" r="5"/><circle cx="966" cy="741" r="5"/><circle cx="1008" cy="918" r="5"/><circle cx="99" cy="876" r="5"/><circle cx="123" cy="1080" r="5"/><circle cx="597" cy="1143" r="8"/><circle cx="1212" cy="693" r="5"/><circle cx="753" cy="1074" r="10"/><circle class="k" cx="753" cy="1074" r="4"/></g>
 <text x="83" y="30">Бор</text><text x="177" y="118">Zaječar<tspan x="177" dy="36">Зајечар</tspan></text><text class="e" x="491" y="94">Vidin<tspan x="491" dy="36">Видин</tspan></text><text class="st" x="550" y="118">Calafat</text><text x="764" y="60">Băilești</text><text x="1173" y="229">Dăbuleni</text><text x="707" y="274">Lom<tspan x="707" dy="36">Лом</tspan></text><text x="971" y="308">Kozloduy<tspan x="971" dy="36">Козлодуй</tspan></text><text x="404" y="328">Belogradchik<tspan x="404" dy="36">Белоградчик</tspan></text><text x="172" y="373">Knjazevac<tspan x="172" dy="36">Књажевац</tspan></text><text x="698" y="490">Montana<tspan x="698" dy="36">Монтана</tspan></text><text x="878" y="640">Vratsa<tspan x="878" dy="36">Враца</tspan></text><text x="733" y="745">Varshets<tspan x="733" dy="36">Вършец</tspan></text><text x="965" y="782">Mezdra<tspan x="965" dy="36">Мездра</tspan></text><text x="1009" y="869">Botevgrad<tspan x="1009" dy="36">Ботевград</tspan></text><text x="100" y="916">Vlasotince<tspan x="100" dy="36">Власотинце</tspan></text><text x="123" y="1030">Surdulica<tspan x="123" dy="36">Сурдулица</tspan></text><text x="1211" y="642">Lukovit<tspan x="1211" dy="36">Луковит</tspan></text><text x="1224" y="1171">Panagyurishte<tspan x="1224" dy="36">Панагюрище</tspan></text>
 <text class="c" x="752" y="994">Sofia<tspan x="752" dy="54">София</tspan></text><text class="b" x="597" y="1191">Pernik</text>
 <text class="g" x="404" y="642">Парк природе<tspan x="404" dy="42">„Стара</tspan><tspan x="404" dy="42">Планина“</tspan></text>
 <text class="w" transform="translate(1160 324) rotate(20)">Danube</text><text class="w" transform="translate(545 30) rotate(15)">Danube</text>
 <g class="sh"><rect x="735" y="591" width="66" height="33"/><text x="768" y="618">E79</text><rect x="357" y="774" width="75" height="33"/><text x="394" y="802">E-80</text><rect x="492" y="865" width="63" height="33"/><text x="523" y="892">E80</text><rect x="1107" y="868" width="51" height="33"/><text x="1132" y="895">A2</text><rect x="933" y="1017" width="51" height="33"/><text x="958" y="1044">A2</text><rect x="1170" y="1056" width="81" height="33"/><text x="1210" y="1083">E871</text></g>
</g>
<g class="lab" transform="translate(1259 -7) scale(.33333)">
 <g class="pt"><circle cx="588" cy="114" r="8"/><circle cx="939" cy="171" r="8"/><circle cx="936" cy="221" r="8"/><circle cx="141" cy="264" r="5"/><circle cx="342" cy="285" r="5"/><circle cx="600" cy="384" r="5"/><circle cx="195" cy="537" r="8"/><circle cx="486" cy="579" r="5"/><circle cx="1077" cy="588" r="5"/><circle cx="744" cy="791" r="8"/><circle cx="252" cy="747" r="8"/><circle cx="465" cy="831" r="5"/><circle cx="252" cy="930" r="8"/><circle cx="582" cy="942" r="8"/><circle cx="885" cy="903" r="5"/><circle cx="624" cy="1134" r="8"/><circle cx="1200" cy="932" r="5"/></g>
 <text x="588" y="96">Alexandria</text><text x="939" y="153">Giurgiu</text><text x="142" y="250">Corabia</text><text x="341" y="234">Turnu<tspan x="341" dy="36">Măgurele</tspan></text><text x="598" y="423">Svishtov<tspan x="598" dy="36">Свищов</tspan></text><text x="487" y="618">Levski<tspan x="487" dy="36">Левски</tspan></text><text x="1077" y="538">Popovo<tspan x="1077" dy="36">Попово</tspan></text><text x="252" y="694">Lovech<tspan x="252" dy="36">Ловеч</tspan></text><text x="465" y="781">Sevlievo<tspan x="465" dy="36">Севлиево</tspan></text><text x="252" y="877">Troyan<tspan x="252" dy="36">Троян</tspan></text><text x="583" y="889">Gabrovo<tspan x="583" dy="36">Габрово</tspan></text><text x="887" y="852">Elena<tspan x="887" dy="36">Елена</tspan></text><text x="621" y="1081">Kazanluk<tspan x="621" dy="36">Казанлък</tspan></text><text class="st" x="1160" y="883">Kotel<tspan x="1160" dy="36">Котел</tspan></text><text class="st" x="1186" y="398">Razgrad<tspan x="1184" dy="36">Разград</tspan></text><text class="st" x="1174" y="609">Targovishte<tspan x="1174" dy="36">Търговище</tspan></text>
 <text class="b" x="936" y="271">Ruse<tspan x="936" dy="45">Русе</tspan></text><text class="b" x="193" y="472">Pleven<tspan x="193" dy="45">Плевен</tspan></text><text class="b" x="746" y="640">Veliko<tspan x="746" dy="45">Tarnovo</tspan><tspan x="746" dy="45">Велико</tspan><tspan x="746" dy="45">Търново</tspan></text><text class="b e" x="1192" y="1022">Sliven<tspan x="1214" dy="46">Сливен</tspan></text>
 <text class="g" x="279" y="1002">Central Balkan<tspan x="279" dy="42">National Park</tspan></text><text class="g s2" x="279" y="1077">Национален<tspan x="279" dy="33">парк</tspan><tspan x="279" dy="33">„Централен</tspan><tspan x="279" dy="33">Балкан“</tspan></text>
 <g class="sh"><rect x="714" y="-4" width="66" height="33"/><text x="747" y="24">E70</text><rect x="912" y="27" width="66" height="33"/><text x="944" y="54">E85</text><rect x="849" y="358" width="66" height="33"/><text x="881" y="385">E85</text><rect x="1029" y="354" width="66" height="33"/><text x="1062" y="381">E70</text><rect x="483" y="518" width="63" height="33"/><text x="515" y="545">E83</text><rect x="18" y="573" width="63" height="33"/><text x="49" y="601">E83</text><rect x="270" y="795" width="81" height="33"/><text x="310" y="822">E772</text><rect x="1002" y="720" width="81" height="33"/><text x="1042" y="747">E772</text><rect x="444" y="1105" width="81" height="33"/><text x="484" y="1132">E871</text></g>
</g>
<g transform="translate(830.400 194)"><path d="M0 0C-1-8-4-11-7.500-15.500-10.500-19.500-12.500-23-12.500-28a12.500 12.500 0 0 1 25 0c0 5-2 8.500-5 12.500C4-11 1-8 0 0z" transform="translate(0 -.5)" fill="#ea4335" stroke="#fff" stroke-opacity=".5" stroke-width=".6"/><circle cy="-28.500" r="4.600" fill="#811411"/></g>
<text class="glogo" x="9.500" y="382.500" textLength="56" lengthAdjust="spacingAndGlyphs"><tspan fill="#4285f4">G</tspan><tspan fill="#ea4335">o</tspan><tspan fill="#fbbc05">o</tspan><tspan fill="#4285f4">g</tspan><tspan fill="#34a853">l</tspan><tspan fill="#ea4335">e</tspan></text>
</svg>
        <div class="maptype"><b>Map</b><span>Satellite</span></div>
        <div class="ctl full"><svg width="18" height="18" viewBox="0 0 18 18" fill="none" stroke="#666" stroke-width="2"><path d="M1 6V1h5M12 1h5v5M17 12v5h-5M6 17H1v-5"/></svg></div>
        <div class="ctl peg"><svg width="18" height="32" viewBox="0 0 18 32"><g fill="#fbb928" stroke="#b98416" stroke-width=".6"><path d="M4.500 12h9l3 9-2 1-1.500-3v11.500h-3.500l-.5-8-.5 8H5V19l-1.500 3-2-1z"/><circle cx="9" cy="6.500" r="5"/></g><path d="M6 12h6l-3 4.500z" fill="#e8711a"/></svg></div>
        <div class="ctl zoom"><svg width="40" height="81" viewBox="0 0 40 81"><path d="M11 20h18M20 11v18M11 61h18" stroke="#666" stroke-width="4"/><path d="M5 40.500h30" stroke="#e6e6e6"/></svg></div>
        <div class="attr"><span>Keyboard shortcuts</span><span>Map data ©2022 Google</span><span>Terms of Use</span></div>
      </div>
    </section>
  </div>
</main>
</div>
</body>
</html>
```
FILE: styles.css
```css
* { box-sizing: border-box; }
body { margin: 0; overflow: hidden; background: #eff3f4; color: #58666e; font: 12.53px/20px "Noto Sans CJK SC", "Open Sans", sans-serif; }
.app { display: flex; width: 1899px; height: 899px; overflow: hidden; }
ul { list-style: none; margin: 0; padding: 0; }
svg { display: block; flex: none; }

.sidebar { width: 200px; flex: none; height: 899px; overflow: hidden; background: #132533; color: #7099bf; }
.logo { height: 53px; }
.logo text { font: 600 24px Lato, sans-serif; fill: #fff; }
.nav li { height: 40px; display: flex; align-items: center; padding: 0 20px 0 21px; }
.nav .ico { width: 15px; height: 15px; margin: 0 17.500px 0 1.500px; }
.nav .ico.wide { width: 18px; height: 14px; margin: 0 16px 0 0; }
.nav span { flex: 1; padding-bottom: 1px; }
.nav.strong { font-weight: 700; }
.nav.strong span { color: #6f97bb; }
.nav .active { background: #0c171f; }
.nav.strong .active span { color: #fff; }
.dot { width: 6px; height: 6px; border-radius: 3px; background: #ff8400; margin-top: 4px; }
.chev { width: 6px; height: 10px; margin-right: 6px; fill: none; stroke: #4878a6; stroke-width: 1.800; }
.sidebar h6 { margin: 10px 0 0; border-top: 2px solid #0c171f; padding: 14px 15px 8px; height: 44px; font-size: 10.750px; line-height: 20px; font-weight: 400; color: #3f6c92; }

.main { flex: 1; display: flex; flex-direction: column; }
.topbar { height: 46px; background: #fff; border-bottom: 1px solid #dfe3e5; display: flex; padding-left: 32px; position: relative; }
.tb { width: 14px; height: 14px; margin-top: 13px; margin-right: 30px; }
.user { margin-left: auto; display: flex; align-items: center; height: 40px; padding-right: 11px; }
.user svg { margin-bottom: 1px; }
.caret { border: 4px solid transparent; border-top-color: #58666e; border-bottom: 0; margin: 2px 10px 0 5px; }
.subbar { height: 51px; background: #f8f8f8; border-bottom: 1px solid #dee5e7; display: flex; align-items: stretch; justify-content: space-between; color: #777; line-height: 49px; }
.crumbs { padding-left: 30px; display: flex; }
.crumbs em { font-style: normal; color: #ccc; width: 16px; padding-left: 4px; }
.crumbs .cur { color: #333b4a; }
.tabs { display: flex; padding-right: 11px; }
.tabs a { padding: 0 15px; }
.tabs .on { background: #e7e7e7; color: #555; width: 68px; }
.more { display: flex; align-items: center; gap: 1px; }
.more i { width: 4px; height: 4px; border-radius: 2px; background: #777; }

.content { padding: 20px 16px 0 20px; }
.row { display: grid; grid-template-columns: 817px 816px; gap: 30px; }
.stats { display: grid; grid-template-columns: 398px 399px; grid-template-rows: 92px 91px 90px; gap: 20px; }
.card { position: relative; border-radius: 2px; display: flex; flex-direction: column; align-items: center; padding-top: 14px; color: #fff; box-shadow: 0 1px 1px rgba(0,0,0,.06); }
strong { font-weight: 100; font-size: 33.200px; line-height: 40px; }
.card span, .last span { font-size: 10.750px; line-height: 18px; margin-top: 3px; opacity: .7; }
.card.plain { background: #fff; } .plain strong { color: #23b7e5; } .card.plain span { color: #98a6ad; opacity: 1; margin-top: 4px; }
.card.blue { background: #1f8fff; } .card.blue span { margin-top: 4px; }
.cyan { background: #23b7e5; }
.green { background: #27c24c; } .green strong { color: #bbf0c6; } .card.green span { opacity: .58; }
.corner { position: absolute; right: 11px; bottom: 5px; }
.last { grid-column: 1 / 3; display: flex; background: #e4e9eb; border-radius: 2px; }
.clock { width: 90px; background: #dde6e9; display: flex; align-items: center; justify-content: center; }
.lastbody { flex: 1; display: flex; flex-direction: column; align-items: center; padding-top: 13px; }
.last strong { color: #1f7fff; }
.last .lastbody span { color: #98a6ad; opacity: 1; margin-top: 4px; }
.chartcard { background: #fff; border-radius: 2px; padding: 16px 15px 0; box-shadow: 0 1px 1px rgba(0,0,0,.06); height: 313px; }
.charthead { display: flex; justify-content: space-between; height: 34px; }
h4 { margin: -1px 0 0 1px; font-weight: 300; font-size: 16.100px; line-height: 20px; color: #98a6ad; }
.switch { width: 35px; height: 20px; border-radius: 10px; background: #27c24c; display: flex; justify-content: flex-end; padding: 1px; margin-right: 1px; }
.switch::after { content: ""; width: 18px; height: 18px; border-radius: 9px; background: #fff; }
.grid { fill: none; stroke: #f5f5f5; }
.axis text { font-size: 9.800px; fill: #8c959b; }
.end { text-anchor: end; } .mid { text-anchor: middle; }
.legend text { font-size: 10.600px; fill: #dbe5ed; font-weight: 500; }

.panel { margin-top: 20px; border: 1px solid #dee5e7; border-radius: 2px; width: 1663px; }
.phead { height: 46px; background: #f6f8f8; display: flex; align-items: center; gap: 4px; padding-left: 15px; padding-bottom: 6px; color: #333; }
.phead svg { margin-top: 1px; }
.mapbox { position: relative; height: 390px; overflow: hidden; font-family: Roboto, sans-serif; }
.sea, .lake { fill: #8ab4f8; }
.isle { fill: #a5dab3; } .sand { fill: #f3e9dc; } .tan { fill: #eed9c0; } .city { fill: #e8eaed; } .wood { fill: #9dd6ac; }
.map path { stroke-linejoin: round; }
.river path { fill: none; stroke: #8ab4f8; stroke-width: 9; }
.dash, .ddash, .white, .minor, .border { fill: none; }
.dash { stroke: #7f9a88; stroke-width: 3; stroke-dasharray: 6 6; }
.ddash { stroke: #6b7b72; stroke-width: 4; stroke-dasharray: 18 10; }
.white { stroke: #fbfdfb; stroke-width: 4; }
.minor { stroke: #f0b429; stroke-width: 4; }
.border { stroke: #5f6b66; stroke-width: 4; }
.mo { fill: none; stroke: #f4b62c; stroke-width: 9.500; }
.mi { fill: none; stroke: #fdeeb5; stroke-width: 4; }
.pt circle { fill: #fff; stroke: #333; stroke-width: 3; }
.pt .k { fill: #222; }
.lab text { font: 400 36px Roboto, sans-serif; fill: #202124; text-anchor: middle; stroke: #e9f5ec; stroke-width: 7; stroke-linejoin: round; paint-order: stroke; }
.lab .b { font-size: 43px; font-weight: 500; } .lab .b.s { font-size: 40px; }
.lab .c { font-size: 52px; font-weight: 500; }
.lab .e { text-anchor: end; } .lab .st { text-anchor: start; }
.lab .g { font-size: 42px; fill: #188038; } .lab .it { font-style: italic; } .lab .s2 { font-size: 36px; }
.lab .w { fill: #1967d2; stroke: none; font-size: 40px; }
.sh rect { fill: #689f38; } .sh .bl { fill: #3b78c9; }
.lab .sh text { font-size: 27px; font-weight: 700; fill: #fff; stroke: none; }
.glogo { font: 500 22px Lato, sans-serif; stroke: #fff; stroke-width: 2px; paint-order: stroke; }
.maptype { position: absolute; left: 10px; top: 10px; height: 40px; display: flex; background: #fff; border-radius: 2px; box-shadow: 0 1px 4px -1px rgba(0,0,0,.4); font-size: 18px; line-height: 40px; color: #565656; text-align: center; }
.maptype b { width: 70px; padding-left: 1px; font-weight: 500; color: #000; border-right: 1px solid #e4e4e4; }
.maptype span { width: 98px; }
.ctl { position: absolute; right: 10px; width: 40px; height: 40px; background: #fff; border-radius: 2px; box-shadow: 0 1px 4px -1px rgba(0,0,0,.4); display: flex; align-items: center; justify-content: center; }
.full { top: 10px; } .peg { top: 213px; } .zoom { top: 285px; height: 81px; }
.attr { position: absolute; right: 0; bottom: 0; display: flex; height: 14px; font-size: 10px; line-height: 14px; color: #000; white-space: nowrap; }
.attr span { background: rgba(245,245,245,.75); padding: 0 5.500px 0 6px; border-left: 1px solid rgba(245,245,245,.4); }
```
